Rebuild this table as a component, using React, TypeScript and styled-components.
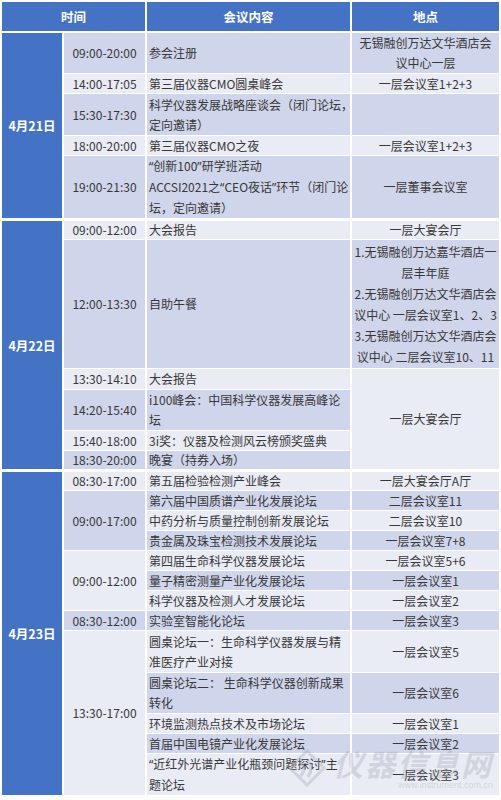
import React from "react";
import styled, { createGlobalStyle } from "styled-components";

type Tone = "dark" | "light";

const colors = {
 blue: "#4472c4",
 dark: "#cfd5ea",
 light: "#e9ebf5",
 text: "#383838",
};

interface Loc {
 text: React.ReactNode;
 tone: Tone;
 span?: number;
 lh?: number;
}

interface Line {
 text: React.ReactNode;
 tone: Tone;
 h: number;
 lh?: number;
 // undefined = covered by a location cell above it
 loc?: Loc;
}

interface Slot {
 time: string;
 tone: Tone;
 lines: Line[];
}

interface Section {
 date: string;
 top: number;
 slots: Slot[];
}

// narrow latin quotes, the CJK font would draw them full width
const Q = styled.span`
 font-family: "Noto Sans", sans-serif;
`;

const sections: Section[] = [
 {
  date: "4月21日",
  top: 1,
  slots: [
   {
    time: "09:00-20:00",
    tone: "dark",
    lines: [
     {
      text: "参会注册",
      tone: "dark",
      h: 41,
      loc: {
       text: (
        <>
         无锡融创万达文华酒店会
         <br />
         议中心一层
        </>
       ),
       tone: "dark",
       lh: 20,
      },
     },
    ],
   },
   {
    time: "14:00-17:05",
    tone: "light",
    lines: [
     {
      text: "第三届仪器CMO圆桌峰会",
      tone: "light",
      h: 19,
      loc: { text: "一层会议室1+2+3", tone: "light" },
     },
    ],
   },
   {
    time: "15:30-17:30",
    tone: "dark",
    lines: [
     {
      text: (
       <>
        科学仪器发展战略座谈会（闭门论坛，
        <br />
        定向邀请）
       </>
      ),
      tone: "dark",
      h: 41,
      lh: 20,
      loc: { text: "", tone: "dark" },
     },
    ],
   },
   {
    time: "18:00-20:00",
    tone: "light",
    lines: [
     {
      text: "第三届仪器CMO之夜",
      tone: "light",
      h: 19,
      loc: { text: "一层会议室1+2+3", tone: "light" },
     },
    ],
   },
   {
    time: "19:00-21:30",
    tone: "dark",
    lines: [
     {
      text: (
       <>
        <Q>“</Q>创新100<Q>”</Q>研学班活动
        <br />
        ACCSI2021之<Q>“</Q>CEO夜话<Q>”</Q>环节（闭门论
        <br />
        坛，定向邀请）
       </>
      ),
      tone: "dark",
      h: 62,
      lh: 20,
      loc: { text: "一层董事会议室", tone: "dark" },
     },
    ],
   },
  ],
 },
 {
  date: "4月22日",
  top: 2,
  slots: [
   {
    time: "09:00-12:00",
    tone: "light",
    lines: [
     {
      text: "大会报告",
      tone: "light",
      h: 18,
      loc: { text: "一层大宴会厅", tone: "light" },
     },
    ],
   },
   {
    time: "12:00-13:30",
    tone: "dark",
    lines: [
     {
      text: "自助午餐",
      tone: "dark",
      h: 128,
      loc: {
       text: (
        <>
         1.无锡融创万达嘉华酒店一
         <br />
         层丰年庭
         <br />
         2.无锡融创万达文华酒店会
         <br />
         议中心 一层会议室1、2、3
         <br />
         3.无锡融创万达文华酒店会
         <br />
         议中心 二层会议室10、11
        </>
       ),
       tone: "dark",
       lh: 21,
      },
     },
    ],
   },
   {
    time: "13:30-14:10",
    tone: "light",
    lines: [
     {
      text: "大会报告",
      tone: "light",
      h: 20,
      loc: { text: "一层大宴会厅", tone: "light", span: 4 },
     },
    ],
   },
   {
    time: "14:20-15:40",
    tone: "dark",
    lines: [
     {
      text: (
       <>
        i100峰会：中国科学仪器发展高峰论
        <br />坛
       </>
      ),
      tone: "dark",
      h: 40,
      lh: 20,
     },
    ],
   },
   {
    time: "15:40-18:00",
    tone: "light",
    lines: [{ text: "3i奖：仪器及检测风云榜颁奖盛典", tone: "light", h: 19 }],
   },
   {
    time: "18:30-20:00",
    tone: "dark",
    lines: [{ text: "晚宴（持券入场）", tone: "dark", h: 18 }],
   },
  ],
 },
 {
  date: "4月23日",
  top: 2,
  slots: [
   {
    time: "08:30-17:00",
    tone: "light",
    lines: [
     {
      text: "第五届检验检测产业峰会",
      tone: "light",
      h: 20,
      loc: { text: "一层大宴会厅A厅", tone: "light" },
     },
    ],
   },
   {
    time: "09:00-17:00",
    tone: "dark",
    lines: [
     {
      text: "第六届中国质谱产业化发展论坛",
      tone: "dark",
      h: 19,
      loc: { text: "二层会议室11", tone: "dark" },
     },
     {
      text: "中药分析与质量控制创新发展论坛",
      tone: "light",
      h: 19,
      loc: { text: "二层会议室10", tone: "light" },
     },
     {
      text: "贵金属及珠宝检测技术发展论坛",
      tone: "dark",
      h: 19,
      loc: { text: "一层会议室7+8", tone: "dark" },
     },
    ],
   },
   {
    time: "09:00-12:00",
    tone: "light",
    lines: [
     {
      text: "第四届生命科学仪器发展论坛",
      tone: "light",
      h: 19,
      loc: { text: "一层会议室5+6", tone: "light" },
     },
     {
      text: "量子精密测量产业化发展论坛",
      tone: "dark",
      h: 19,
      loc: { text: "一层会议室1", tone: "dark" },
     },
     {
      text: "科学仪器及检测人才发展论坛",
      tone: "light",
      h: 19,
      loc: { text: "一层会议室2", tone: "light" },
     },
    ],
   },
   {
    time: "08:30-12:00",
    tone: "dark",
    lines: [
     {
      text: "实验室智能化论坛",
      tone: "dark",
      h: 19,
      loc: { text: "一层会议室3", tone: "dark" },
     },
    ],
   },
   {
    time: "13:30-17:00",
    tone: "light",
    lines: [
     {
      text: (
       <>
        圆桌论坛一：生命科学仪器发展与精
        <br />
        准医疗产业对接
       </>
      ),
      tone: "light",
      h: 41,
      lh: 20,
      loc: { text: "一层会议室5", tone: "light" },
     },
     {
      text: (
       <>
        圆桌论坛二： 生命科学仪器创新成果
        <br />
        转化
       </>
      ),
      tone: "dark",
      h: 40,
      lh: 20,
      loc: { text: "一层会议室6", tone: "dark" },
     },
     {
      text: "环境监测热点技术及市场论坛",
      tone: "light",
      h: 19,
      loc: { text: "一层会议室1", tone: "light" },
     },
     {
      text: "首届中国电镜产业化发展论坛",
      tone: "dark",
      h: 19,
      loc: { text: "一层会议室2", tone: "dark" },
     },
     {
      text: (
       <>
        <Q>“</Q>近红外光谱产业化瓶颈问题探讨<Q>”</Q>主
        <br />
        题论坛
       </>
      ),
      tone: "light",
      h: 40,
      lh: 20,
      loc: { text: "一层会议室3", tone: "light" },
     },
    ],
   },
  ],
 },
];

const GlobalStyle = createGlobalStyle`
 html, body { margin: 0; padding: 0; background: #fff; }
`;

const Page = styled.div`
 position: relative;
 width: 501px;
 padding-top: 1px;
 font-family: "Noto Sans CJK SC", "Noto Sans", sans-serif;
 color: ${colors.text};
`;

const Table = styled.table`
 width: 501px;
 table-layout: fixed;
 border-collapse: separate;
 border-spacing: 2px 1px;
 font-size: 12px;
`;

const HeadCell = styled.th`
 height: 29px;
 padding: 0;
 background: ${colors.blue};
 color: #fff;
 font-size: 12.5px;
 font-weight: 700;
 text-align: center;
`;

const Row = styled.tr<{ $h: number }>`
 height: ${({ $h }) => $h}px;
`;

const Cell = styled.td<{
 $tone: Tone;
 $top: number;
 $align?: "left" | "center";
 $lh?: number;
}>`
 box-sizing: border-box;
 padding: 0 0 0 ${({ $align }) => ($align === "left" ? "2px" : "0")};
 background: ${({ $tone }) => colors[$tone]};
 border-top: ${({ $top }) => $top}px solid #fff;
 text-align: ${({ $align }) => $align || "center"};
 line-height: ${({ $lh }) => $lh || 18}px;
 white-space: nowrap;
 vertical-align: middle;
`;

const DateCell = styled.td<{ $top: number }>`
 box-sizing: border-box;
 padding: 0;
 background: ${colors.blue};
 border-top: ${({ $top }) => $top}px solid #fff;
 color: #fff;
 font-size: 12.5px;
 font-weight: 700;
 text-align: center;
`;

const Watermark = styled.div`
 position: absolute;
 right: 8px;
 bottom: 6px;
 display: flex;
 align-items: center;
 gap: 6px;
 pointer-events: none;
 color: rgba(150, 156, 168, 0.3);
`;

const MarkText = styled.div`
 display: flex;
 flex-direction: column;
 align-items: flex-end;
`;

const MarkTitle = styled.span`
 font-size: 30px;
 font-weight: 700;
 letter-spacing: 2px;
 line-height: 34px;
 font-style: italic;
`;

const MarkUrl = styled.span`
 font-family: "Liberation Sans", sans-serif;
 font-size: 9px;
 line-height: 10px;
`;

function ScheduleRows({ section }: { section: Section }) {
 const total = section.slots.reduce((n, s) => n + s.lines.length, 0);
 const rows: React.ReactNode[] = [];
 let first = true;
 section.slots.forEach((slot, si) => {
  slot.lines.forEach((line, li) => {
   const top = first ? section.top : 0;
   rows.push(
    <Row key={`${si}-${li}`} $h={line.h}>
     {first && (
      <DateCell rowSpan={total} $top={top}>
       {section.date}
      </DateCell>
     )}
     {li === 0 && (
      <Cell rowSpan={slot.lines.length} $tone={slot.tone} $top={top}>
       {slot.time}
      </Cell>
     )}
     <Cell $tone={line.tone} $top={top} $align="left" $lh={line.lh}>
      {line.text}
     </Cell>
     {line.loc && (
      <Cell
       rowSpan={line.loc.span || 1}
       $tone={line.loc.tone}
       $top={top}
       $lh={line.loc.lh}
      >
       {line.loc.text}
      </Cell>
     )}
    </Row>
   );
   first = false;
  });
 });
 return <>{rows}</>;
}

export default function App() {
 return (
  <Page>
   <GlobalStyle />
   <Table>
    <colgroup>
     <col style={{ width: 60 }} />
     <col style={{ width: 81 }} />
     <col style={{ width: 203 }} />
     <col style={{ width: 147 }} />
    </colgroup>
    <thead>
     <tr>
      <HeadCell colSpan={2}>时间</HeadCell>
      <HeadCell>会议内容</HeadCell>
      <HeadCell>地点</HeadCell>
     </tr>
    </thead>
    <tbody>
     {sections.map((s) => (
      <ScheduleRows key={s.date} section={s} />
     ))}
    </tbody>
   </Table>
   <Watermark>
    <svg width="40" height="40" viewBox="0 0 40 40">
     <g fill="none" stroke="currentColor" strokeWidth="3">
      <path d="M20 3 L37 20 L20 37 L3 20 Z" />
      <path d="M13 14 Q20 20 14 28" />
      <path d="M21 12 Q27 20 21 29" />
     </g>
    </svg>
    <MarkText>
     <MarkTitle>仪器信息网</MarkTitle>
     <MarkUrl>www.instrument.com.cn</MarkUrl>
    </MarkText>
   </Watermark>
  </Page>
 );
}
